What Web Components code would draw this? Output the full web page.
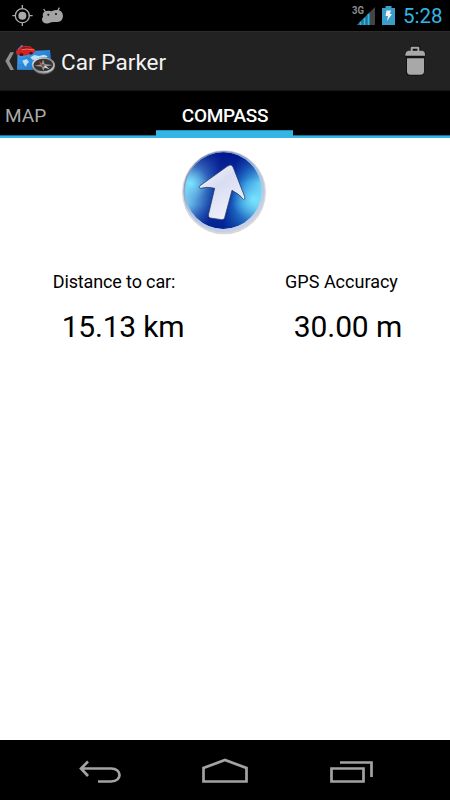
<!DOCTYPE html>
<html lang="en">
<head>
<meta charset="utf-8">
<title>Car Parker</title>
<style>
  html, body { height: 100%; margin: 0; }
  body { font-family: Roboto, "Noto Sans", sans-serif; background: #fff; }
</style>
</head>
<body>
<car-parker-app>
  <status-bar slot="top" time="5:28"></status-bar>
  <action-bar slot="top">Car Parker</action-bar>
  <tab-strip slot="top">
    <tab-item>MAP</tab-item>
    <tab-item active>COMPASS</tab-item>
  </tab-strip>
  <compass-dial></compass-dial>
  <reading-row>
    <gps-reading label="Distance to car:" style="--label-space: -.13px; --value-space: -.2px; --value-indent: 18px">15.13 km</gps-reading>
    <gps-reading label="GPS Accuracy">30.00 m</gps-reading>
  </reading-row>
  <nav-bar slot="bottom"></nav-bar>
</car-parker-app>

<script>
class BaseElement extends HTMLElement {
  connectedCallback() {
    if (this.shadowRoot) return;
    this.attachShadow({ mode: "open" });
    this.shadowRoot.innerHTML = this.template();
  }
}

class CarParkerApp extends BaseElement {
  template() {
    return /* html */ `<style>
      :host { display: flex; flex-direction: column; height: 100vh; overflow: hidden; }
      main { flex: 1; display: flex; flex-direction: column; align-items: center; background: #fff; }
    </style>
    <slot name="top"></slot>
    <main><slot></slot></main>
    <slot name="bottom"></slot>`;
  }
}

class StatusBar extends BaseElement {
  template() {
    return /* html */ `<style>
      :host { display: flex; flex: none; height: 31px; background: #000; }
      .left { flex: 1; }
      .right { display: flex; }
      svg { display: block; }
      .time {
        width: 47px; font-size: 20.5px; line-height: 33px;
        color: #33b5e5; white-space: nowrap;
      }
      .net { font: bold 10px Roboto, sans-serif; fill: #8c8c8c; }
    </style>
    <div class="left">
      <svg width="100" height="31" viewBox="0 0 300 93">
        <g fill="none" stroke="#aaa" stroke-width="4">
          <circle cx="67" cy="47" r="21"/>
          <path d="M67 15V28M67 66V78M37 47H48M86 47H98"/>
        </g>
        <circle cx="67" cy="47" r="12" fill="#aaa"/>
        <path d="M137 37L131 27M172 34L178 23" stroke="#a4a4a4" stroke-width="4"/>
        <path d="M133 36Q143 30 154 34Q173 26 183 34Q191 42 188 54Q185 67 168 66Q154 65 146 70Q132 73 127 63Q124 56 129 50Q126 40 133 36Z" fill="#a4a4a4"/>
        <circle cx="145" cy="44" r="3" fill="#111"/><circle cx="168" cy="42" r="3" fill="#111"/>
      </svg>
    </div>
    <div class="right">
      <svg width="63" height="31" viewBox="0 0 63 31">
        <text class="net" x="12" y="14" textLength="12" lengthAdjust="spacingAndGlyphs">3G</text>
        <path d="M17 25L35 7V25Z" fill="#444"/>
        <path d="M17 25L30 12V25Z" fill="#1d7597"/>
        <path d="M20.5 25V21.700M24.500 25V18M28.500 25V14" stroke="#33b5e5" stroke-width="1.6"/>
        <path d="M42 8H45.500V6H51.500V8H55V25H42Z" fill="#3a9fc8"/>
        <path d="M46.500 10.500H51L49.800 14H52L47 21L48 16H45.500Z" fill="#f4f4f4"/>
      </svg>
      <div class="time">${this.getAttribute("time")}</div>
    </div>`;
  }
}

class ActionBar extends BaseElement {
  template() {
    return /* html */ `<style>
      :host {
        box-sizing: border-box; display: flex; align-items: center; flex: none;
        height: 60px; background: #222; color: #f3f3f3;
        border-top: 1px solid #2c2c2c; border-bottom: 1px solid #161616;
      }
      svg { display: block; flex: none; }
      .app-icon { margin-bottom: 2px; }
      .title { flex: 1; padding: 3px 0 0 3px; font-size: 22.5px; letter-spacing: .05px; line-height: 31px; }
    </style>
    <svg class="app-icon" width="58" height="40" viewBox="0 0 174 120">
      <defs>
        <linearGradient id="map" x2="1" y2="1"><stop stop-color="#4fa9f4"/><stop offset="1" stop-color="#1369c0"/></linearGradient>
        <linearGradient id="rim" x2="1" y2="1"><stop stop-color="#eee"/><stop offset=".5" stop-color="#888"/><stop offset="1" stop-color="#ddd"/></linearGradient>
      </defs>
      <path d="M31 37H42L28 63L42 90H31L16 63Z" fill="#8e8e8e"/>
      <path d="M53 28L65 15L94 33L150 30L155 78L140 91L51 89Z" fill="url(#map)"/>
      <path d="M79 33L83 89M109 32L111 89M137 31L140 89M52 55H152M52 75H154" stroke="#2583d4" stroke-width="2"/>
      <path d="M67 62L80 57L87 66L81 71L78 80L73 75ZM91 52L103 45L117 48L132 44L143 49L136 56L120 54L110 60L97 59Z" fill="#b9e2f9"/>
      <path d="M48 32Q58 28 62 21Q72 15 91 19L96 25Q106 26 105 35L98 41L67 48L49 43Z" fill="#d62020"/>
      <path d="M63 28L68 21L88 22L92 26Z" fill="#672225"/>
      <path d="M65 29L81 27L103 30" fill="none" stroke="#ff6b61" stroke-width="3"/>
      <ellipse cx="64" cy="44" rx="6" ry="4" fill="#38191a"/><ellipse cx="93" cy="40" rx="5" ry="4" fill="#38191a"/>
      <ellipse cx="131" cy="78" rx="34" ry="25" fill="#777" stroke="#3d3d3d" stroke-width="2"/>
      <ellipse cx="130" cy="75" rx="32" ry="21" fill="#333" stroke="url(#rim)" stroke-width="5"/>
      <path d="M103 77L125 73L129 58L134 72L158 75L135 80L130 93L125 80Z" fill="#999"/>
      <path d="M116 64L134 76L126 80Z" fill="#e64a38"/><path d="M134 76L149 88L128 80Z" fill="#eee"/>
      <circle cx="130" cy="77" r="4" fill="#555"/>
    </svg>
    <div class="title"><slot></slot></div>
    <svg width="60" height="50" viewBox="0 0 180 150">
      <path d="M60 48V32Q60 29 64 29H87Q91 29 91 33V43Q106 44 107 53V58Q106 63 103 64V110Q102 119 93 119H58Q49 119 48 110V64Q44 63 44 58V52Q46 45 60 43Z" fill="#111"/>
      <path d="M62 44V35Q62 32 65 32H85Q88 32 88 35V44H98Q105 46 105 54V59H46V54Q47 46 54 44ZM68 38V44H82V38Z" fill="#a8a8a8" fill-rule="evenodd"/>
      <path d="M51 67H102V107Q101 116 92 116H60Q52 116 51 107Z" fill="#a8a8a8"/>
    </svg>`;
  }
}

class TabStrip extends BaseElement {
  template() {
    return /* html */ `<style>
      :host {
        box-sizing: border-box; display: flex; flex: none; height: 47px;
        background: linear-gradient(#33b5e5, #33b5e5) 0 100% / 100% 2px no-repeat,
                    linear-gradient(#1b6f90, #1b6f90) 0 44px / 100% 1px no-repeat, #000;
      }
    </style><slot></slot>`;
  }
}

class TabItem extends BaseElement {
  template() {
    return /* html */ `<style>
      :host {
        box-sizing: border-box; width: 156px; height: 47px; padding: 1px 0 0 5px;
        color: #aaa; font-size: 19px; line-height: 47px;
      }
      :host([active]) {
        width: 137px; padding-left: 1px; text-align: center; color: #fff; font-weight: 500;
        letter-spacing: -.3px;
        background: linear-gradient(#2690b8, #2690b8) 0 39px / 100% 1px no-repeat,
                    linear-gradient(#33b5e5, #33b5e5) 0 100% / 100% 7px no-repeat;
      }
    </style><slot></slot>`;
  }
}

class CompassDial extends BaseElement {
  template() {
    return /* html */ `<style>
      :host { display: block; flex: none; width: 106px; height: 104px; margin-top: 2px; }
      svg { display: block; }
    </style>
    <svg width="106" height="104" viewBox="0 0 318 312">
      <defs>
        <linearGradient id="ring" x1=".2" y1="0" x2=".8" y2="1">
          <stop stop-color="#7482ae"/><stop offset=".5" stop-color="#a9c3e6"/><stop offset="1" stop-color="#cfd4e6"/>
        </linearGradient>
        <linearGradient id="disc" x1="0" y1=".4" x2="1" y2=".6">
          <stop stop-color="#8cdcf8"/><stop offset=".16" stop-color="#5ba7e0"/><stop offset=".4" stop-color="#0d36a0"/>
          <stop offset=".58" stop-color="#0a38a5"/><stop offset=".78" stop-color="#329be0"/><stop offset="1" stop-color="#7be8ff"/>
        </linearGradient>
        <linearGradient id="shade" x2="0" y2="1">
          <stop stop-color="#00108a" stop-opacity=".9"/><stop offset=".4" stop-color="#00108a" stop-opacity="0"/>
          <stop offset=".68" stop-color="#00158a" stop-opacity="0"/><stop offset="1" stop-color="#00158a" stop-opacity=".7"/>
        </linearGradient>
        <radialGradient id="glow"><stop stop-color="#7ce9ff" stop-opacity=".9"/><stop offset="1" stop-color="#5eb3e8" stop-opacity="0"/></radialGradient>
        <linearGradient id="arrow" x2=".6" y2="1"><stop stop-color="#f8f9ff"/><stop offset=".45" stop-color="#d9ddf3"/><stop offset="1" stop-color="#f0f1fb"/></linearGradient>
        <clipPath id="face"><circle cx="154" cy="152" r="115"/></clipPath>
      </defs>
      <circle cx="156" cy="157" r="126" fill="#d8d8da"/>
      <circle cx="156" cy="155" r="122" fill="url(#ring)"/>
      <g clip-path="url(#face)">
        <circle cx="154" cy="152" r="115" fill="url(#disc)"/>
        <circle cx="154" cy="152" r="115" fill="url(#shade)"/>
        <circle cx="245" cy="178" r="66" fill="url(#glow)"/>
        <circle cx="56" cy="130" r="52" fill="url(#glow)"/>
      </g>
      <path d="M174 75Q180 73 184 83L218 170Q220 180 215 179Q206 165 180 151L158 233Q156 240 149 239L115 234Q108 232 109 225L128 145Q105 139 86 145Q79 145 84 137L166 79Z"
            fill="url(#arrow)" stroke="#26395f" stroke-opacity=".75" stroke-width="3"/>
    </svg>`;
  }
}

class ReadingRow extends BaseElement {
  template() {
    return /* html */ `<style>
      :host { display: grid; grid-template-columns: 228px 227px; width: 450px; padding-top: 26px; }
    </style><slot></slot>`;
  }
}

class GpsReading extends BaseElement {
  template() {
    return /* html */ `<style>
      :host { display: flex; flex-direction: column; align-items: center; color: #000; white-space: nowrap; }
      .label { font-size: 18px; line-height: 24px; letter-spacing: var(--label-space, 0); }
      .value {
        padding: 15px 0 0 var(--value-indent, 13px);
        font-size: 30px; line-height: 36px; letter-spacing: var(--value-space, -.12px);
      }
    </style>
    <div class="label">${this.getAttribute("label")}</div>
    <div class="value"><slot></slot></div>`;
  }
}

class NavBar extends BaseElement {
  template() {
    return /* html */ `<style>
      :host { display: flex; flex: none; justify-content: center; height: 60px; background: #000; }
      svg { display: block; }
      path { fill: none; stroke: #a3a3a3; stroke-width: 2.700; }
    </style>
    <svg width="126" height="60" viewBox="36 0 126 60">
      <path d="M80.500 28.500H111C117 28.500 119.500 32 119.500 35S117 41.500 111 41.500H98M88 21.500L81 28.500L88 36"/>
    </svg>
    <svg width="126" height="60" viewBox="162 0 126 60">
      <path d="M203.500 41.500V28L225 20L246.500 28V41.500Z"/>
    </svg>
    <svg width="126" height="60" viewBox="288 0 126 60">
      <path d="M331.500 28.500H363.500V41.500H331.500ZM340 22.500H371.500V37"/>
    </svg>`;
  }
}

customElements.define("car-parker-app", CarParkerApp);
customElements.define("status-bar", StatusBar);
customElements.define("action-bar", ActionBar);
customElements.define("tab-strip", TabStrip);
customElements.define("tab-item", TabItem);
customElements.define("compass-dial", CompassDial);
customElements.define("reading-row", ReadingRow);
customElements.define("gps-reading", GpsReading);
customElements.define("nav-bar", NavBar);
</script>
</body>
</html>
